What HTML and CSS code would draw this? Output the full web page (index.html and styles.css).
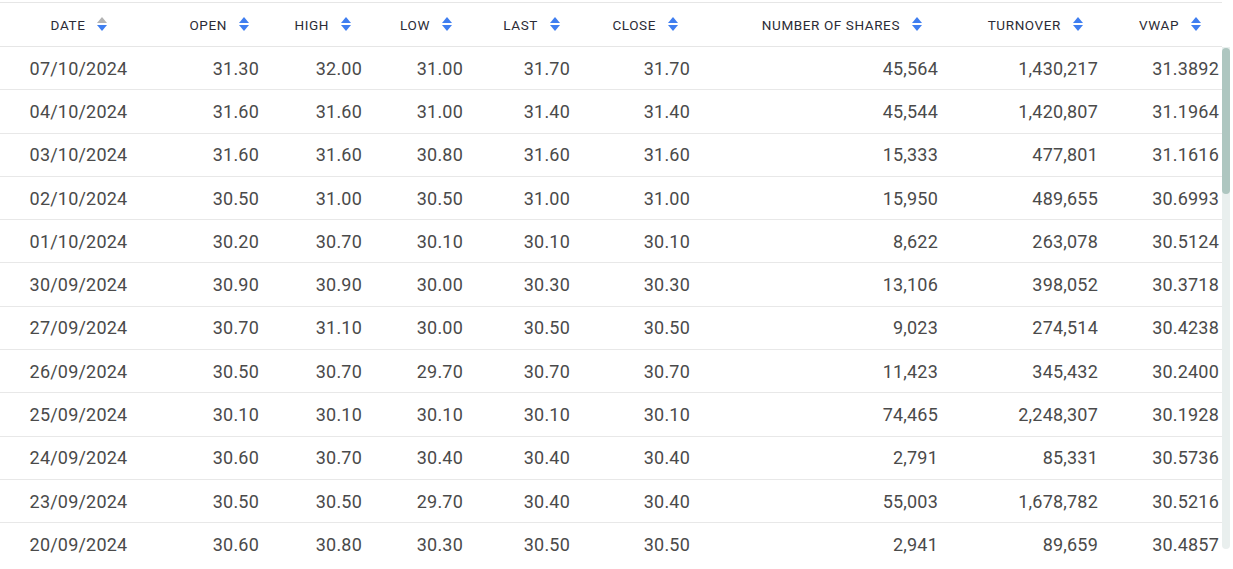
FILE: index.html
```html
<!DOCTYPE html>
<html>
<head>
<meta charset="utf-8">
<link rel="stylesheet" href="styles.css">
</head>
<body>
<div class="wrap">
  <table class="hist">
    <colgroup>
      <col class="c-date"><col class="c-open"><col class="c-high"><col class="c-low"><col class="c-last"><col class="c-close"><col class="c-shares"><col class="c-turn"><col class="c-vwap">
    </colgroup>
    <thead>
      <tr>
        <th class="h-date"><span class="lbl">Date</span><span class="sort desc"><i class="up"></i><i class="dn"></i></span></th>
        <th class="h-open"><span class="lbl">Open</span><span class="sort"><i class="up"></i><i class="dn"></i></span></th>
        <th class="h-high"><span class="lbl">High</span><span class="sort"><i class="up"></i><i class="dn"></i></span></th>
        <th class="h-low"><span class="lbl">Low</span><span class="sort"><i class="up"></i><i class="dn"></i></span></th>
        <th class="h-last"><span class="lbl">Last</span><span class="sort"><i class="up"></i><i class="dn"></i></span></th>
        <th class="h-close"><span class="lbl">Close</span><span class="sort"><i class="up"></i><i class="dn"></i></span></th>
        <th class="h-shares"><span class="lbl">Number of shares</span><span class="sort"><i class="up"></i><i class="dn"></i></span></th>
        <th class="h-turn"><span class="lbl">Turnover</span><span class="sort"><i class="up"></i><i class="dn"></i></span></th>
        <th class="h-vwap"><span class="lbl">VWAP</span><span class="sort"><i class="up"></i><i class="dn"></i></span></th>
      </tr>
    </thead>
    <tbody>
      <tr><td>07/10/2024</td><td>31.30</td><td>32.00</td><td>31.00</td><td>31.70</td><td>31.70</td><td>45,564</td><td>1,430,217</td><td>31.3892</td></tr>
      <tr><td>04/10/2024</td><td>31.60</td><td>31.60</td><td>31.00</td><td>31.40</td><td>31.40</td><td>45,544</td><td>1,420,807</td><td>31.1964</td></tr>
      <tr><td>03/10/2024</td><td>31.60</td><td>31.60</td><td>30.80</td><td>31.60</td><td>31.60</td><td>15,333</td><td>477,801</td><td>31.1616</td></tr>
      <tr><td>02/10/2024</td><td>30.50</td><td>31.00</td><td>30.50</td><td>31.00</td><td>31.00</td><td>15,950</td><td>489,655</td><td>30.6993</td></tr>
      <tr><td>01/10/2024</td><td>30.20</td><td>30.70</td><td>30.10</td><td>30.10</td><td>30.10</td><td>8,622</td><td>263,078</td><td>30.5124</td></tr>
      <tr><td>30/09/2024</td><td>30.90</td><td>30.90</td><td>30.00</td><td>30.30</td><td>30.30</td><td>13,106</td><td>398,052</td><td>30.3718</td></tr>
      <tr><td>27/09/2024</td><td>30.70</td><td>31.10</td><td>30.00</td><td>30.50</td><td>30.50</td><td>9,023</td><td>274,514</td><td>30.4238</td></tr>
      <tr><td>26/09/2024</td><td>30.50</td><td>30.70</td><td>29.70</td><td>30.70</td><td>30.70</td><td>11,423</td><td>345,432</td><td>30.2400</td></tr>
      <tr><td>25/09/2024</td><td>30.10</td><td>30.10</td><td>30.10</td><td>30.10</td><td>30.10</td><td>74,465</td><td>2,248,307</td><td>30.1928</td></tr>
      <tr><td>24/09/2024</td><td>30.60</td><td>30.70</td><td>30.40</td><td>30.40</td><td>30.40</td><td>2,791</td><td>85,331</td><td>30.5736</td></tr>
      <tr><td>23/09/2024</td><td>30.50</td><td>30.50</td><td>29.70</td><td>30.40</td><td>30.40</td><td>55,003</td><td>1,678,782</td><td>30.5216</td></tr>
      <tr><td>20/09/2024</td><td>30.60</td><td>30.80</td><td>30.30</td><td>30.50</td><td>30.50</td><td>2,941</td><td>89,659</td><td>30.4857</td></tr>
    </tbody>
  </table>
  <div class="scrollbar"><div class="thumb"></div></div>
</div>
</body>
</html>
```

FILE: styles.css
```css
html, body {
  margin: 0;
  padding: 0;
  background: #fff;
}
body {
  font-family: Roboto, "Liberation Sans", sans-serif;
  color: #444;
  overflow: hidden;
}
.wrap {
  position: relative;
  width: 1225px;
  padding-top: 2px;
}
.hist {
  width: 1222px;
  table-layout: fixed;
  border-collapse: collapse;
  border-top: 1px solid #e6e6e6;
}
.c-date { width: 156px; }
.c-open { width: 103px; }
.c-high { width: 103px; }
.c-low { width: 101px; }
.c-last { width: 107px; }
.c-close { width: 120px; }
.c-shares { width: 248px; }
.c-turn { width: 160px; }
.c-vwap { width: 124px; }

.hist th {
  height: 43px;
  padding: 0;
  font-size: 13.5px;
  font-weight: 400;
  text-transform: uppercase;
  letter-spacing: 0.6px;
  color: #2b2b36;
  text-align: right;
  white-space: nowrap;
  vertical-align: middle;
  border-bottom: 1px solid #e6e6e6;
}
.hist th.h-date { text-align: center; padding-left: 2px; }
.h-open { padding-right: 10px !important; }
.h-high { padding-right: 11px !important; }
.h-low { padding-right: 11px !important; }
.h-last { padding-right: 10px !important; }
.h-close { padding-right: 12px !important; }
.h-shares { padding-right: 16px !important; }
.h-turn { padding-right: 15px !important; }
.h-vwap { padding-right: 21px !important; }

.lbl { vertical-align: middle; }
.sort {
  display: inline-flex;
  flex-direction: column;
  gap: 2px;
  margin-left: 12px;
  vertical-align: middle;
  position: relative;
  top: -1px;
}
.sort i {
  display: block;
  width: 0;
  height: 0;
  border-left: 5px solid transparent;
  border-right: 5px solid transparent;
}
.sort .up { border-bottom: 6px solid #3f7ef0; }
.sort .dn { border-top: 6px solid #3f7ef0; }
.sort.desc .up { border-bottom-color: #b3b3b3; }

.hist td {
  height: 42.3px;
  padding: 0;
  font-size: 18px;
  letter-spacing: 0.2px;
  color: #4a4a4a;
  text-align: right;
  vertical-align: middle;
  border-bottom: 1px solid #e8e8e8;
  white-space: nowrap;
}
.hist td:first-child { text-align: center; padding-left: 1px; }
.hist td:last-child { padding-right: 3px; }
.hist tr:last-child td { border-bottom: none; }

.scrollbar {
  position: absolute;
  left: 1222px;
  top: 47px;
  width: 8px;
  height: 502px;
  background: #e9efee;
  border-radius: 0 0 4px 4px;
}
.thumb {
  margin-top: 1px;
  height: 146px;
  background: #aec6c0;
  border-radius: 4px;
}
```
